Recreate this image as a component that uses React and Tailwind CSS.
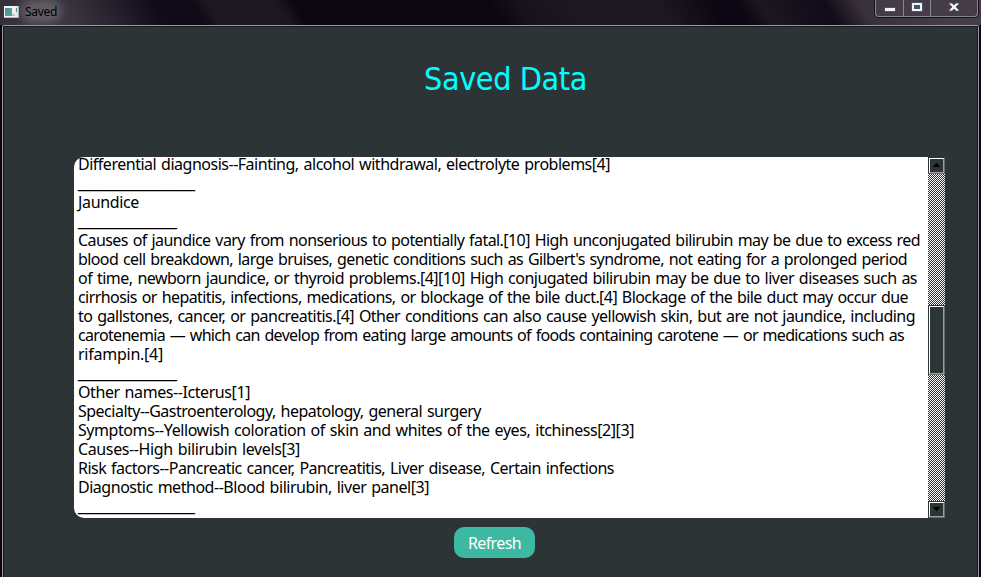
import { useLayoutEffect, useRef } from "react";

// Saved entries: [text, rendered width in px]
const LINES = [
  ["Differential diagnosis--Fainting, alcohol withdrawal, electrolyte problems[4]", 532],
  ["_____________", 117],
  ["Jaundice", 61],
  ["___________", 99],
  ["Causes of jaundice vary from nonserious to potentially fatal.[10] High unconjugated bilirubin may be due to excess red", 842],
  ["blood cell breakdown, large bruises, genetic conditions such as Gilbert's syndrome, not eating for a prolonged period", 829],
  ["of time, newborn jaundice, or thyroid problems.[4][10] High conjugated bilirubin may be due to liver diseases such as", 839],
  ["cirrhosis or hepatitis, infections, medications, or blockage of the bile duct.[4] Blockage of the bile duct may occur due", 830],
  ["to gallstones, cancer, or pancreatitis.[4] Other conditions can also cause yellowish skin, but are not jaundice, including", 837],
  ["carotenemia — which can develop from eating large amounts of foods containing carotene — or medications such as", 826],
  ["rifampin.[4]", 85],
  ["___________", 99],
  ["Other names--Icterus[1]", 172],
  ["Specialty--Gastroenterology, hepatology, general surgery", 403],
  ["Symptoms--Yellowish coloration of skin and whites of the eyes, itchiness[2][3]", 556],
  ["Causes--High bilirubin levels[3]", 222],
  ["Risk factors--Pancreatic cancer, Pancreatitis, Liver disease, Certain infections", 536],
  ["Diagnostic method--Blood bilirubin, liver panel[3]", 351],
  ["_____________", 117],
];

// Text whose letter spacing is adjusted to reach a fixed width
function Fit({ text, width, className = "" }) {
  const ref = useRef(null);
  useLayoutEffect(() => {
    const el = ref.current;
    el.style.letterSpacing = "0px";
    const natural = el.getBoundingClientRect().width;
    el.style.letterSpacing = `${(width - natural) / text.length}px`;
  }, [text, width]);
  return (
    <span ref={ref} className={`inline-block whitespace-pre ${className}`}>
      {text}
    </span>
  );
}

function ArrowButton({ down }) {
  return (
    <div className="h-[17px] w-[17px] shrink-0 border border-t-[#2d3436] border-l-[#2d3436] border-r-[#6b6b6b] border-b-[#6b6b6b] bg-[#2d3436]">
      <div className="flex h-full w-full items-center justify-center border border-t-white border-l-white border-r-[#a09c9c] border-b-[#a09c9c]">
        <svg width="7" height="4" viewBox="0 0 7 4" shapeRendering="crispEdges" className="mr-px mb-px">
          <path d={down ? "M0 0h7v1H6v1H5v1H4v1H3V3H2V2H1V1H0z" : "M3 0h1v1h1v1h1v1h1v1H0V3h1V2h1V1h1z"} fill="#000" />
        </svg>
      </div>
    </div>
  );
}

function TitleBar() {
  return (
    <div className="flex h-[25px] shrink-0 items-start justify-between bg-[linear-gradient(60deg,#352f3a_0px,#3b3540_65px,#2b2430_100px,#110a17_145px,#110a17_178px,#1d1721_190px,#1d1721_250px,#0c0610_267px,#0c0610_435px,#18121c_460px,#1e1822_510px,#1e1822_580px,#0d0713_628px,#0d0713_650px,#1d1721_670px,#18111d_695px,#120b18_725px,#38313c_755px,#443d47_820px)]">
      <div className="flex items-center pt-[4px] pl-[4px]">
        <svg width="15" height="13" viewBox="0 0 15 13" shapeRendering="crispEdges">
          <defs>
            <linearGradient id="app" x2="1" y2="1">
              <stop stopColor="#4b8cae" />
              <stop offset="1" stopColor="#58ad7b" />
            </linearGradient>
          </defs>
          <path d="M0 1h15v12H0z" fill="#b9b9bb" />
          <path d="M0 1h14v11H0z" fill="#f4f4f5" />
          <path d="M1 3h7v8H1z" fill="url(#app)" />
          <path d="M8 9h3v2H8z" fill="#c5c6ca" />
          <path d="M12 3h1v4h-1z" fill="#4591a2" />
        </svg>
        <span className="ml-[6px] flex h-[15px] items-center rounded-full bg-[#7a757d]/60 text-[12px] text-black shadow-[0_0_8px_5px_rgba(122,117,125,0.6)]">
          <Fit text="Saved" width={32} className="font-['Noto_Sans'] leading-[15px]" />
        </span>
      </div>
      <div className="mr-[2px] flex h-[18px] w-[105px] rounded-b-[5px] border border-t-0 border-[#17101c] bg-[#443d48]">
        <div className="flex w-full rounded-b-[4px] border border-t-0 border-[#8a848c]">
          <div className="flex w-[28px] justify-center border-r border-[#8a848c] pt-[7px]">
            <svg width="13" height="6" viewBox="0 0 13 6" shapeRendering="crispEdges">
              <path d="M1 0h12v5H1z" fill="#46566a" />
              <path d="M2 1h10v3H2z" fill="#f4f4f5" />
            </svg>
          </div>
          <div className="flex w-[27px] justify-center border-r border-[#8a848c] pt-[2px]">
            <svg width="12" height="10" viewBox="0 0 12 10" shapeRendering="crispEdges">
              <path d="M0 0h12v10H0z" fill="#46566a" />
              <path d="M1 1h10v8H1zM3 3v4h6V3z" fill="#f4f4f5" fillRule="evenodd" />
            </svg>
          </div>
          <div className="flex flex-1 justify-center pt-[2px]">
            <svg width="12" height="10" viewBox="0 0 12 10">
              <path d="M1 1h3l2 2 2-2h3v1L8 5l3 3v1H8L6 7 4 9H1V8l3-3-3-3z" fill="#f4f4f5" stroke="#46566a" strokeWidth=".8" />
            </svg>
          </div>
        </div>
      </div>
    </div>
  );
}

export default function App() {
  return (
    <div className="flex h-[577px] w-[981px] flex-col overflow-hidden bg-[#0d0713]">
      <TitleBar />
      <div className="mr-[2px] ml-[2px] flex min-h-0 flex-1 flex-col rounded-t-[2px] border border-b-0 border-[#9d959f]">
        <div className="flex min-h-0 flex-1 flex-col border border-b-0 border-[#181a20] bg-[#2d3436]">
          <h1 className="mt-[31px] ml-[420px] h-[40px] text-[32px] leading-[40px] text-[#00ffff]">
            <Fit text="Saved Data" width={163} className="font-['DejaVu_Sans_Condensed','DejaVu_Sans',sans-serif] [font-stretch:condensed]" />
          </h1>
          <div className="mt-[59px] ml-[70px] flex h-[361px] w-[871px] shrink-0">
            <div className="flex-1 overflow-hidden rounded-l-[10px] bg-white pl-[4px] font-['Noto_Sans',sans-serif] text-[16px] text-black">
              <div className="-mt-[2px]">
                {LINES.map(([text, width], i) => (
                  <div key={i} className="flex h-[19px] leading-[19px]">
                    <Fit
                      text={text}
                      width={width}
                      className={
                        text.startsWith("__")
                          ? "font-['Liberation_Sans',sans-serif] leading-[18px]"
                          : "leading-[19px] [word-spacing:1.2px]"
                      }
                    />
                  </div>
                ))}
              </div>
            </div>
            <div className="flex w-[17px] flex-col bg-[repeating-conic-gradient(#fff_0_25%,#2d3436_0_50%)] bg-[size:2px_2px]">
              <ArrowButton />
              <div className="mt-[131px] h-[70px] border border-t-[#2d3436] border-l-[#2d3436] border-r-[#6b6b6b] border-b-[#6b6b6b] bg-[#2d3436]">
                <div className="h-full border border-t-white border-l-white border-r-[#a09c9c] border-b-[#a09c9c]" />
              </div>
              <div className="flex-1" />
              <ArrowButton down />
            </div>
          </div>
          <button className="mt-[9px] ml-[450px] h-[31px] w-[81px] shrink-0 rounded-[10px] bg-[#3db8a2] text-[16px] leading-[32px] text-white">
            <Fit text="Refresh" width={53} className="font-['Noto_Sans',sans-serif]" />
          </button>
        </div>
      </div>
    </div>
  );
}
